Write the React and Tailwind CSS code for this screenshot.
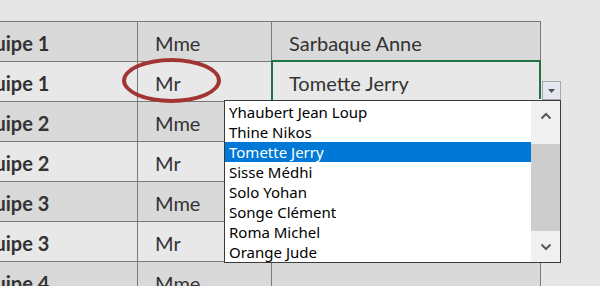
import React from "react"

const rows = [
    { team: "Equipe 1", civ: "Mme", name: "Sarbaque Anne", dark: true },
    { team: "Equipe 1", civ: "Mr", name: "Tomette Jerry", dark: false, active: true },
    { team: "Equipe 2", civ: "Mme", name: "", dark: true },
    { team: "Equipe 2", civ: "Mr", name: "", dark: false },
    { team: "Equipe 3", civ: "Mme", name: "", dark: true },
    { team: "Equipe 3", civ: "Mr", name: "", dark: false },
    { team: "Equipe 4", civ: "Mme", name: "", dark: true },
]

const options = [
    "Yhaubert Jean Loup",
    "Thine Nikos",
    "Tomette Jerry",
    "Sisse Médhi",
    "Solo Yohan",
    "Songe Clément",
    "Roma Michel",
    "Orange Jude",
]

function Chevron({ up }) {
    return (
        <svg width="12" height="8" viewBox="0 0 12 8">
            <path
                d={up ? "M1.5 6.5 L6 2 L10.5 6.5" : "M1.5 1.5 L6 6 L10.5 1.5"}
                fill="none"
                stroke="#5a5a5a"
                strokeWidth="2"
            />
        </svg>
    )
}

function ValidationList() {
    return (
        <div className="absolute left-[224px] top-[100px] w-[337px] h-[163px] bg-white border border-[#3a3a3a] flex font-['Noto_Sans',sans-serif] text-[15px] text-black">
            <div className="flex-1 pt-[1px] overflow-hidden">
                {options.map((o) => (
                    <div
                        key={o}
                        className={`h-[20px] leading-[20px] pl-[4px] whitespace-nowrap ${o === "Tomette Jerry" ? "bg-[#0078d7] text-white" : ""}`}
                    >
                        {o}
                    </div>
                ))}
            </div>
            <div className="w-[29px] bg-[#f0f0f0] flex flex-col">
                <div className="h-[30px] flex items-center justify-center">
                    <Chevron up />
                </div>
                <div className="h-[13px]" />
                <div className="h-[87px] bg-[#cdcdcd]" />
                <div className="flex-1 flex items-center justify-center">
                    <Chevron />
                </div>
            </div>
        </div>
    )
}

export default function App() {
    return (
        <div className="relative w-[600px] h-[286px] overflow-hidden bg-[#e6e6e6] font-['Lato',sans-serif] text-[20px] text-[#333333]">
            <div className="h-[21px]" />
            <div className="ml-[-40px] w-[581px] grid grid-cols-[178px_134px_269px] border-t border-[#7a7a7a]">
                {rows.map((r, i) => {
                    const bg = r.dark ? "bg-[#d9d9d9]" : "bg-[#e8e8e8]"
                    return (
                        <React.Fragment key={i}>
                            <div className={`h-[40px] border-b border-r border-[#7a7a7a] ${bg} pl-[12px] pt-[2px] flex items-center font-bold whitespace-nowrap`}>
                                {r.team}
                            </div>
                            <div className={`h-[40px] border-b border-r border-[#7a7a7a] ${bg} pl-[17px] pt-[2px] flex items-center`}>
                                {r.civ}
                            </div>
                            <div className={`relative h-[40px] border-b border-r border-[#7a7a7a] ${bg} pl-[17px] pt-[2px] flex items-center whitespace-nowrap`}>
                                {r.name}
                                {r.active && (
                                    <>
                                        <div className="absolute left-[-1px] top-[-2px] right-[-1px] bottom-[-1px] border-2 border-[#217346]" />
                                        <div className="absolute right-[-4px] bottom-[-4px] w-[6px] h-[6px] bg-[#217346] border border-white" />
                                    </>
                                )}
                            </div>
                        </React.Fragment>
                    )
                })}
            </div>

            <div className="absolute left-[122px] top-[58px] w-[99px] h-[45px] rounded-[50%] border-[4px] border-[#a33434]" />

            <div className="absolute left-[542px] top-[81px] w-[19px] h-[19px] bg-[#e4e7ee] border border-[#a6a6a6] flex items-center justify-center">
                <svg width="7" height="4" viewBox="0 0 7 4">
                    <path d="M0 0 L7 0 L3.5 4 Z" fill="#505050" />
                </svg>
            </div>

            <ValidationList />
        </div>
    )
}
